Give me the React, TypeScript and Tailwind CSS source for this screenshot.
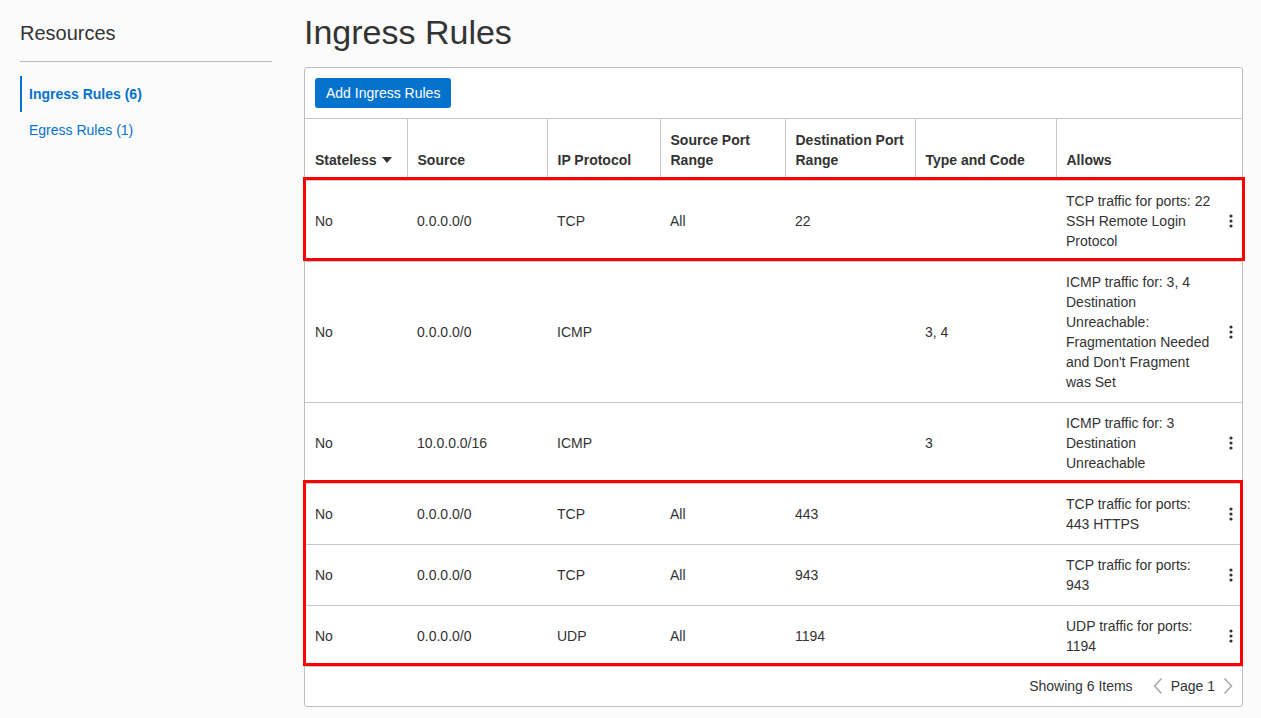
import { useState } from 'react';

type Rule = {
  stateless: string;
  source: string;
  protocol: string;
  srcPort: string;
  dstPort: string;
  typeCode: string;
  allows: string;
};

const rules: Rule[] = [
  { stateless: 'No', source: '0.0.0.0/0', protocol: 'TCP', srcPort: 'All', dstPort: '22', typeCode: '', allows: 'TCP traffic for ports: 22 SSH Remote Login Protocol' },
  { stateless: 'No', source: '0.0.0.0/0', protocol: 'ICMP', srcPort: '', dstPort: '', typeCode: '3, 4', allows: "ICMP traffic for: 3, 4 Destination Unreachable: Fragmentation Needed and Don't Fragment was Set" },
  { stateless: 'No', source: '10.0.0.0/16', protocol: 'ICMP', srcPort: '', dstPort: '', typeCode: '3', allows: 'ICMP traffic for: 3 Destination Unreachable' },
  { stateless: 'No', source: '0.0.0.0/0', protocol: 'TCP', srcPort: 'All', dstPort: '443', typeCode: '', allows: 'TCP traffic for ports: 443 HTTPS' },
  { stateless: 'No', source: '0.0.0.0/0', protocol: 'TCP', srcPort: 'All', dstPort: '943', typeCode: '', allows: 'TCP traffic for ports: 943' },
  { stateless: 'No', source: '0.0.0.0/0', protocol: 'UDP', srcPort: 'All', dstPort: '1194', typeCode: '', allows: 'UDP traffic for ports: 1194' },
];

function Kebab() {
  return (
    <svg width="4" height="14" viewBox="0 0 4 14" className="mx-auto">
      <circle cx="2" cy="2" r="1.6" fill="#333" />
      <circle cx="2" cy="7" r="1.6" fill="#333" />
      <circle cx="2" cy="12" r="1.6" fill="#333" />
    </svg>
  );
}

function Chevron({ dir }: { dir: 'left' | 'right' }) {
  return (
    <svg width="10" height="18" viewBox="0 0 10 18">
      <path
        d={dir === 'left' ? 'M8.5 1.5 L1.5 9 L8.5 16.5' : 'M1.5 1.5 L8.5 9 L1.5 16.5'}
        fill="none"
        stroke="#a8a8a8"
        strokeWidth="1.5"
      />
    </svg>
  );
}

export default function App() {
  const [active, setActive] = useState('ingress');

  const th = 'px-[10px] pb-[10px] pt-[10px] align-bottom text-left font-bold text-[#333] border-l border-[#c4c7cc] first:border-l-0';
  const td = 'px-[10px] py-[10px] align-middle';

  return (
    <div className="min-h-screen w-full bg-[#fbfbfb] font-['Liberation_Sans',Arial,sans-serif] text-[14px] leading-[20px] text-[#333]">
      <div className="flex gap-[32px] pl-[20px] pr-[18px]">
        {/* Sidebar */}
        <aside className="w-[252px] shrink-0 pt-[21px]">
          <h2 className="text-[20px] leading-[24px] text-[#333]">Resources</h2>
          <div className="mt-[16px] border-t border-[#b9bcc4]" />
          <nav className="mt-[14px] flex flex-col">
            <button
              onClick={() => setActive('ingress')}
              className={`flex h-[36px] items-center border-l-2 pl-[7px] text-left text-[#0572ce] ${active === 'ingress' ? 'border-[#0572ce] font-bold' : 'border-transparent'}`}
            >
              Ingress Rules (6)
            </button>
            <button
              onClick={() => setActive('egress')}
              className={`flex h-[36px] items-center border-l-2 pl-[7px] text-left text-[#0572ce] ${active === 'egress' ? 'border-[#0572ce] font-bold' : 'border-transparent'}`}
            >
              Egress Rules (1)
            </button>
          </nav>
        </aside>

        {/* Main */}
        <main className="flex-1 pt-[12px]">
          <h1 className="text-[34px] leading-[40px] text-[#333]">Ingress Rules</h1>

          <div className="mt-[15px] rounded-[3px] border border-[#bcbec4] bg-white">
            <div className="flex h-[51px] items-center border-b border-[#c4c7cc] px-[10px]">
              <button className="h-[30px] rounded-[3px] bg-[#0572ce] px-[11px] text-[14px] text-white">
                Add Ingress Rules
              </button>
            </div>

            <div className="relative">
              <table className="w-full table-fixed border-collapse">
                <colgroup>
                  <col className="w-[102px]" />
                  <col className="w-[140px]" />
                  <col className="w-[113px]" />
                  <col className="w-[125px]" />
                  <col className="w-[130px]" />
                  <col className="w-[141px]" />
                  <col className="w-[159px]" />
                  <col />
                </colgroup>
                <thead>
                  <tr className="h-[61px]">
                    <th className={th}>
                      <span className="inline-flex items-center gap-[6px]">
                        Stateless
                        <svg width="10" height="6" viewBox="0 0 10 6">
                          <path d="M0 0 L10 0 L5 6 Z" fill="#333" />
                        </svg>
                      </span>
                    </th>
                    <th className={th}>Source</th>
                    <th className={th}>IP Protocol</th>
                    <th className={th}>Source Port Range</th>
                    <th className={th}>Destination Port Range</th>
                    <th className={th}>Type and Code</th>
                    <th className={th} colSpan={2}>Allows</th>
                  </tr>
                </thead>
                <tbody>
                  {rules.map((r, i) => (
                    <tr key={i} className="border-t border-[#c4c7cc]">
                      <td className={td}>{r.stateless}</td>
                      <td className={td}>{r.source}</td>
                      <td className={td}>{r.protocol}</td>
                      <td className={td}>{r.srcPort}</td>
                      <td className={td}>{r.dstPort}</td>
                      <td className={td}>{r.typeCode}</td>
                      <td className="py-[10px] pl-[10px] pr-[1px] align-middle">{r.allows}</td>
                      <td className="pl-[4px] align-middle">
                        <Kebab />
                      </td>
                    </tr>
                  ))}
                </tbody>
              </table>

              {/* highlight annotations */}
              <div className="pointer-events-none absolute left-[-2px] right-[-3px] top-[58px] h-[84px] border-[3px] border-[#ff0000]" />
              <div className="pointer-events-none absolute left-[-2px] right-[-1px] top-[361px] h-[186px] border-[3px] border-[#ff0000]" />
            </div>

            <div className="flex h-[40px] items-center justify-end border-t border-[#c4c7cc] pr-[9px]">
              <span>Showing 6 Items</span>
              <span className="ml-[20px] flex items-center">
                <Chevron dir="left" />
              </span>
              <span className="ml-[8px]">Page 1</span>
              <span className="ml-[8px] flex items-center">
                <Chevron dir="right" />
              </span>
            </div>
          </div>
        </main>
      </div>
    </div>
  );
}
